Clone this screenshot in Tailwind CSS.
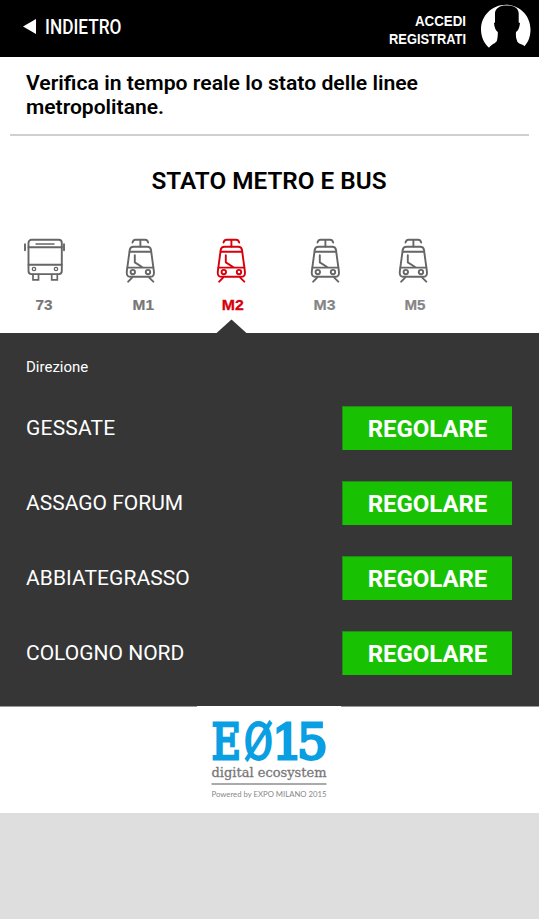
<!DOCTYPE html>
<html lang="it">
<head>
<meta charset="utf-8">
<title>Stato metro e bus</title>
<script src="https://cdn.jsdelivr.net/npm/@tailwindcss/browser@4"></script>
</head>
<body class="bg-[#dedede] font-['Roboto',sans-serif] text-black">
<svg class="hidden">
  <symbol id="tram" viewBox="0 0 31 46">
    <g fill="none" stroke="currentColor" stroke-width="1.9" stroke-linecap="round" stroke-linejoin="round">
      <path d="M7.5 4.6Q8.3 1.8 10.5 1.8H20.2Q22.4 1.8 23.2 4.6M15.4 1.8V8.5"/>
      <path d="M8.5 8.7H22.3Q25.5 8.7 26 12L28.9 33.5Q29.4 38.7 25.6 38.7H5.2Q1.3 38.7 1.8 33.5L4.7 12Q5.2 8.7 8.5 8.7Z"/>
      <path d="M4.8 13.7H26M2.5 29.6H28.3M9.8 17.2V24.4L17.5 29.2M7.1 39.6L3.2 43.7M24.2 39.6L28.3 43.7"/>
      <circle cx="7.8" cy="34.1" r="2.2"/><circle cx="23" cy="34.1" r="2.2"/>
    </g>
  </symbol>
</svg>
<header class="flex h-[57px] items-start justify-between bg-black pl-[23px] pr-2 text-white">
  <a class="flex items-center pt-[13px]">
    <svg class="mr-[9px] block" width="13" height="28" viewBox="0 0 13 28"><path d="M0 13.5L13 6V21Z" fill="#fff"/></svg>
    <svg class="overflow-visible" width="80" height="28"><text x="0" y="21" textLength="76.5" lengthAdjust="spacingAndGlyphs" fill="#fff" font-family="Roboto" font-weight="500" font-size="21">INDIETRO</text></svg>
  </a>
  <div class="flex">
    <svg class="overflow-visible" width="78" height="57" fill="#fff" font-family="Liberation Sans" font-weight="700" font-size="14">
      <text x="26" y="26" textLength="51" lengthAdjust="spacingAndGlyphs">ACCEDI</text>
      <text x="0" y="44" textLength="77" lengthAdjust="spacingAndGlyphs">REGISTRATI</text>
    </svg>
    <svg class="ml-[13px]" width="51" height="57" viewBox="0 0 51 57">
      <path d="M9 47.8C4 43.5 1 36.5 1 29.5C1 15.8 12 4.8 26 4.8S50.5 15.8 50.5 29.5C50.5 36.5 48.3 42 44.5 46.2C42 43.5 37.5 44 37 40.5Q35.5 38 36 32Q39.3 30 40 23L38.7 22.5V13C38 7 32 5.5 26 5.5S15.5 8 15 13V22.5L14 23Q14.5 29.5 17.8 32Q18 36 17 40.5C16 43.5 11.5 44 9 47.8Z" fill="#fff"/>
    </svg>
  </div>
</header>
<main class="bg-white">
  <div class="mx-[10px] h-[79px] border-b-2 border-[#d0d0d0] px-4 pt-[14px]"><svg class="block overflow-visible" width="400" height="48" font-family="Roboto" font-size="21" font-weight="600"><text x="0" y="19" textLength="392" lengthAdjust="spacingAndGlyphs">Verifica in tempo reale lo stato delle linee</text><text x="0" y="43" textLength="138" lengthAdjust="spacingAndGlyphs">metropolitane.</text></svg></div>
  <h1 class="flex h-[101px] justify-center pt-[29px]"><svg class="overflow-visible" width="236" height="32"><text x="-.5" y="24" textLength="235" lengthAdjust="spacingAndGlyphs" font-size="24" font-weight="600" font-family="Roboto">STATO METRO E BUS</text></svg></h1>
  <nav class="flex h-24 pl-[23px] pt-px text-[#666]" aria-label="Linee">
    <svg class="mr-[59px]" width="43" height="80" viewBox="0 0 43 80">
      <g fill="none" stroke="currentColor" stroke-width="1.9" stroke-linecap="round">
        <rect x="5.5" y="1.8" width="33.3" height="34.3" rx="3"/>
        <path d="M5.5 9.3H38.8M5.5 26.7H38.8M2 6.3V12.2M41 6.3V12.2"/>
        <path d="M13 6H31" stroke-width="1.4"/>
        <path d="M10 36.3V41.8H15.5V36.3M28.7 36.3V41.8H34.3V36.3" stroke-width="1.7"/>
        <circle cx="11" cy="31" r="1.7" stroke-width="1.3"/><circle cx="33" cy="31" r="1.7" stroke-width="1.3"/>
      </g>
      <text x="12.5" y="71.5" font-family="Liberation Sans" font-weight="700" font-size="15" fill="#777" stroke="#777" stroke-width=".2" textLength="17" lengthAdjust="spacingAndGlyphs">73</text>
    </svg>
    <svg class="mr-[60px]" width="31" height="80"><use href="#tram" width="31" height="46"/><text x="7.5" y="71.5" font-family="Liberation Sans" font-weight="700" font-size="15" fill="#777" stroke="#777" stroke-width=".2" textLength="21.5" lengthAdjust="spacingAndGlyphs">M1</text></svg>
    <svg class="mr-[62.7px] text-[#d7000b]" width="31" height="80"><use href="#tram" width="31" height="46"/><text x="5.7" y="71.5" font-family="Liberation Sans" font-weight="700" font-size="15" fill="currentColor" stroke="currentColor" stroke-width=".3" textLength="22" lengthAdjust="spacingAndGlyphs">M2</text></svg>
    <svg class="mr-[57.6px]" width="31" height="80"><use href="#tram" width="31" height="46"/><text x="3.5" y="71.5" font-family="Liberation Sans" font-weight="700" font-size="15" fill="#858585" stroke="#858585" stroke-width=".2" textLength="22" lengthAdjust="spacingAndGlyphs">M3</text></svg>
    <svg width="31" height="80"><use href="#tram" width="31" height="46"/><text x="6.5" y="71.5" font-family="Liberation Sans" font-weight="700" font-size="15" fill="#858585" stroke="#858585" stroke-width=".2" textLength="21" lengthAdjust="spacingAndGlyphs">M5</text></svg>
  </nav>
  <section class="relative h-[373px] bg-[#363636] pl-[26px] pr-[27px] pt-6 text-white">
    <svg class="absolute left-[216px] top-[-14px]" width="31" height="15"><path d="M0 14.5L15.5 .5L31 14.5Z" fill="#363636"/></svg>
    <h2 class="mb-[29px] h-5 text-[15px] leading-5">Direzione</h2>
    <ul class="flex flex-col gap-[31px] text-[21px]">
      <li class="flex h-11 items-center justify-between"><span class="pt-0.5 tracking-[0.2px]">GESSATE</span><b class="flex h-11 w-[170px] items-center justify-center border-l border-t border-[#238c18] bg-[#18c202] text-2xl font-bold tracking-[-0.05px]">REGOLARE</b></li>
      <li class="flex h-11 items-center justify-between"><span class="pt-0.5">ASSAGO FORUM</span><b class="flex h-11 w-[170px] items-center justify-center border-l border-t border-[#238c18] bg-[#18c202] text-2xl font-bold tracking-[-0.05px]">REGOLARE</b></li>
      <li class="flex h-11 items-center justify-between"><span class="pt-0.5 tracking-[0.07px]">ABBIATEGRASSO</span><b class="flex h-11 w-[170px] items-center justify-center border-l border-t border-[#238c18] bg-[#18c202] text-2xl font-bold tracking-[-0.05px]">REGOLARE</b></li>
      <li class="flex h-11 items-center justify-between"><span class="pt-0.5">COLOGNO NORD</span><b class="flex h-11 w-[170px] items-center justify-center border-l border-t border-[#238c18] bg-[#18c202] text-2xl font-bold tracking-[-0.05px]">REGOLARE</b></li>
    </ul>
  </section>
  <footer class="flex h-[107px] justify-center border-t border-[#999] bg-white">
    <svg class="-ml-px -mt-px overflow-visible bg-white" width="144" height="106" viewBox="0 0 144 106">
      <g fill="#0a9fe3" stroke="#0a9fe3" stroke-width="2.8" font-family="DejaVu Serif" font-size="49">
        <text x="14.5" y="52.8" textLength="29.5" lengthAdjust="spacingAndGlyphs">E</text>
        <text x="47.3" y="52.8" textLength="28.3" lengthAdjust="spacingAndGlyphs">Ø</text>
        <text x="75" y="52.8" textLength="31" lengthAdjust="spacingAndGlyphs">1</text>
        <text x="100" y="52.8" textLength="31" lengthAdjust="spacingAndGlyphs">5</text>
      </g>
      <text x="14.5" y="71" font-family="DejaVu Serif" font-size="13" fill="#777" stroke="#777" stroke-width=".3" textLength="115" lengthAdjust="spacingAndGlyphs">digital ecosystem</text>
      <path d="M14.5 78H129.5" stroke="#aaa" stroke-width="1.8"/>
      <text x="14.5" y="91" font-family="Lato" font-size="8" fill="#888" textLength="115" lengthAdjust="spacingAndGlyphs">Powered by EXPO MILANO 2015</text>
    </svg>
  </footer>
</main>
</body>
</html>
